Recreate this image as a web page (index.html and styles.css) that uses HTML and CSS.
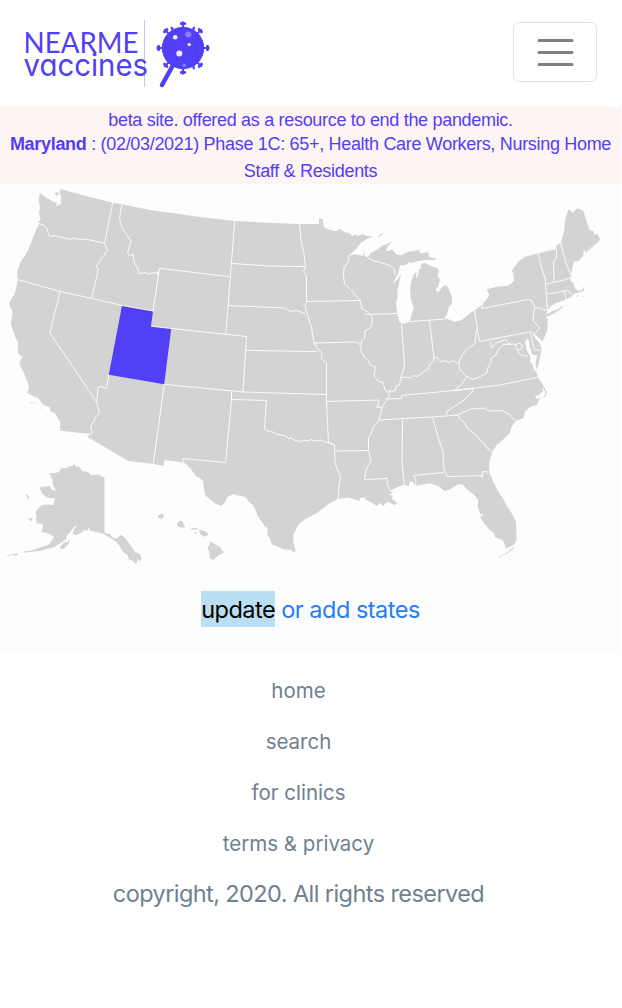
FILE: index.html
```html
<!DOCTYPE html>
<html lang="en">
<head>
<meta charset="utf-8">
<title>NEARME vaccines</title>
<link rel="stylesheet" href="styles.css">
</head>
<body>
<header class="navbar">
  <a class="brand" aria-label="NEARME vaccines">
    <svg class="logo" width="190" height="70" viewBox="22 19 190 70">
      <path d="M144.5 20V87" stroke="#c9c1fb" stroke-width="1"/>
      <text class="logo-top" x="23.5" y="53" textLength="115" lengthAdjust="spacingAndGlyphs">NEARME</text>
      <text class="logo-bottom" x="23.5" y="75.500" textLength="124.500" lengthAdjust="spacingAndGlyphs">vaccines</text>
      <g fill="#513ff5" stroke="#513ff5">
        <circle cx="183" cy="48" r="21.2" stroke="none"/>
        <path d="M172 67L162 85" stroke-width="4.500" stroke-linecap="round"/>
        <g stroke="none">
          <path id="spike" d="M182 28V25.200L180 24.500V22.500L182 22 183 21 184 22 186 22.500V24.500L184 25.200V28Z"/>
          <use href="#spike" transform="rotate(45 183 48)"/>
          <use href="#spike" transform="rotate(90 183 48)"/>
          <use href="#spike" transform="rotate(135 183 48)"/>
          <use href="#spike" transform="rotate(180 183 48)"/>
          <use href="#spike" transform="rotate(225 183 48)"/>
          <use href="#spike" transform="rotate(270 183 48)"/>
          <use href="#spike" transform="rotate(315 183 48)"/>
        </g>
        <path d="M171.700 27.800l.8 1.500M194 27.800l-.6 1.500M194 68.200l-.6-1.500" fill="none" stroke-width="2.400" stroke-linecap="round"/>
      </g>
      <g fill="#f1effc">
        <circle cx="175.2" cy="37.2" r="2.3"/><circle cx="189.2" cy="44.6" r="1.7"/><circle cx="179.3" cy="53.6" r="3"/>
        <circle cx="188.3" cy="34.6" r="3" fill="#8f7cf0"/><circle cx="184.2" cy="65.2" r="1.8" fill="#8f7cf0"/>
      </g>
    </svg>
  </a>
  <button class="toggler" aria-label="Menu">
    <svg width="45" height="45" viewBox="0 0 30 30"><path d="M4 7h22M4 15h22M4 23h22" stroke="#808080" stroke-width="2" stroke-linecap="round"/></svg>
  </button>
</header>

<div class="banner">
  <p class="beta">beta site. offered as a resource to end the pandemic.</p>
  <p class="phase"><b>Maryland</b> : (02/03/2021) Phase 1C: 65+, Health Care Workers, Nursing Home<br>Staff &amp; Residents</p>
</div>

<main class="map-section">
  <svg class="map" width="621" height="390" viewBox="0 184 621 390">
    <g class="land">
      <path d="M39.7 192.7L45.7 197.3 53 201.5 57 203 56 206 58 206 59 203.500 60 205 61 204.500 60.500 201 61.500 197 59.500 193 60.300 189L86 196 112.700 202.700 122 204.300 150 210 170 212.800 200 217 234.700 221 275 223 300 224 319 224V218.300L322.700 219.300 324 227.300 327 229 333.300 230.700 337 231 339.300 229 345 232.300 349 233 352.700 236 355 234.300 358 236 362.700 234.300 368 236.200 373.300 236 367 239 361 242.700 356 249 349 255.500 355 254 359 255 362 256 365 252.300 364 256 367.700 257.300 371 253 376.700 250 383.300 245 391.700 242 388 246 386 250.500 388 251 391.700 249.300 394 252 397.300 255 401.700 255 408.300 251.700 414 251 419.300 249.300 420 253.300 428.300 252.300 429 256.700 432 258 435 257.300 435.500 259.500 433.300 260 425 260 415 261.700 411.700 263.300 409 262 406 265 400 265.500 398 274 395 279 392.700 283.500 396 281 402 274 399.300 280 399 285 397.300 290 397.500 297 396 303.300 397.300 313.300 399.300 321.700 404 324 409.300 321.700 411.700 315 413.700 307.700 410.700 298.300 410 288.300 411.700 280 414 274 416.700 271.700 416 277.300 417.700 276.700 419 269.300 421.500 268 420.700 265 424 262.700 429 265 433.300 267 437.700 268.300 439 271.700 437.500 275 440 280 438.300 286.700 436 288.300 436 291 438.500 292 440 290 442 287 445.700 285 448 287 449.500 291 451.700 296.700 452 304 449.300 306 446.700 315 444.300 318.300 449 319.500 454 321.700 461.700 320 466.700 316 470 313.300 475 310 481.700 305 488.300 297.300 489.300 295 486.700 289.300 496.700 286.700 508.300 285.700 514 280.700 513.300 273.300 511.700 270.700 518.300 261.700 525 256.700 538.300 253.300 556 249 556.700 245 559 244 560.700 243.300 564 231.700 565 220 568.300 210 570 210 572.300 212.700 577.700 208.300 583.300 210.700 589.300 230 593.300 230.700 594 234.300 597.300 234.300 600.500 239.300 597.300 242.700 593.300 246 592 248 590.500 246.500 590 251 588 249 586.700 253.300 584 250 583 256.700 581 258 579.300 261 574 261.700 571.700 271.700 571 277.300 570 280 573.300 283.300 575 288.300 578.300 291 582.500 290 583.300 288.500 582 286.300 584.500 288.500 583.700 291 578 293 575 293.300 572.300 296.500 565 300 556.700 302.700 551 306 547.300 311 546.500 313 546 317.300 547.700 319 547.700 323.300 547.300 330 545 336 542.700 341.500 538 337 532.700 333.300 534 337 538 341 540 344 541.700 349.300 540.500 355 538.300 365 536.300 369.300 535.500 363.300 537 356.700 531.700 354 531 349 529.300 346.700 529.500 342 527.700 338 525 341.700 526 346 526.700 350 528 353 530.500 357 530 361 532.500 365 534 370 536.500 372 537.700 377.300 541.700 383.300 545 388.300 546.700 391.700 546 396 543.300 398 545.500 394 545 391 542 387 543 391 539 395 535 396 537 399 541 398 538.300 401.500 536.700 405 530 406.700 525 412 523.300 418.300 516 421 511.700 426.700 510 432.700 501.700 441 496.700 445 492.300 451.700 489.300 461.700 489.300 471.700 493.300 481.700 498 491 504 500 505 503 511.700 513.300 516 521.700 516.700 536.700 516 542 513.300 545 506 548.500 505 546 504 542.300 500.700 539 495 537.500 494 533 490 530.500 485 524.300 480 516.700 482 516 483.300 512.300 480.500 515 479.300 511.700 477.700 506.700 478.300 500 474.300 495 466.700 489 463.300 485 458.300 484 454 487 450 489.300 444.300 491 438.300 486 430 483.300 415 485.700 413 482 410 481 409 485.700 403.300 485 398 487 395 488.300 390 491 393 493 389 494.500 392.700 496 392 499 397.500 503 395 505 390 503 387.300 501.700 383.300 506 380 503 376.700 506 370.700 502 365 499.500 366 497.500 359.300 498 360 501 348.300 497.700 338.300 498.700 328.300 504 316.700 513.300 306.700 518.300 300 523 296.700 528 293.300 535 293.500 543 295.700 550.700 293.300 552.700 291 550 283.300 549.300 271.700 544.300 270 538 267.300 535 267.500 528 265 526.700 258.300 516.700 256 511 252.700 505 249 502 245 496.700 238 495.500 232.700 494 227.300 497.300 225 502 221.700 505.700 216 504 211.700 500.700 206 496 204.300 491.700 203.300 481.700 200 478 196.700 476.700 190 468 185 463.300 183 462.300 164.300 460 163.700 465.700 153.300 464 128.300 461 87.300 436.700 90.700 434 60.300 430.700 60 421.700 55 413.300 50 410.700V407L43.300 405 38.300 398.300 27.300 393.300 29 386 24 373.300 19.300 363.300 22.300 356.700 17.700 353.300 18 341.700 15 336.700 10.700 323.300 12.700 313.300 9 302.700 15 293.300 17.700 280 17.300 271.700 20 263.300 28.300 250 36.700 228.300 39.300 223.300 38 222 40.700 219.300 39 213 40 208.300 38.700 200Z"/>
      <path d="M55 193l3-1 .5 3-2 1zM377 237.500L380 234.500 384 233 381 236ZM547 317L546 315 551.700 311.500 558 309 563.500 305.300 561.700 308.300 555 312.700ZM576 296l3-1-1 2zM583 296l2 .3-2 .7zM30 402l3 .5-2 1zM34 402l3.500 1.500-4-.5zM46 414l3 2.500-2-1zM45 420l1.500 3.500-1-1zM514 546l-5 5-8 5 7-3 5-4zM503 555l-6 2.500 4-.5z"/>
      <path d="M49.300 473.300L55 473 59 472 61 468.500 67 468 70 466 72 466.500 74 464.300 76 466.500 79 467 82 471 88 472 91 475 98 474.500 104.500 477.500V532.500L108 534 109.500 533 112 537 116 539 120.700 535 124 537 128 541.700 131 546 135 551.700 140 554.500 141.500 558 140.500 561 138 559.500 136 564 132 560.500 129 559.500 127.500 555 123 551.700 119 545 115 541 108 536.500 103 533.500 96 532 90 530.500 88.500 527.500 87 531 84 530 82.500 532 77 535 72.500 534 74 529 78 525.500 74 527 70 532 66 536.500 66.500 539 60 543.500 55 546.700 48 548.500 41.700 550.500 34 551.500 25 552.700 24 551.500 31 550.500 41.700 547 49 544.500 54 537 50 534.500 45 532.500 41.500 532 43.500 525 41 523.500 37 523.500 35.500 518 37 517.500 35.500 511.700 40 506.500 43.300 505 48 504.500 53.300 505 55 498.500 46.700 497.500 41.700 493 39.700 487.500 45 486.500 50 486 51.500 489.500 56 491 53 485 52.500 480Z"/>
      <path d="M60 547l4-4.500 4-.5 0-2 2 .5-2 4-4 4-3 .5zM25 493.500l3 2 2 4-3-2zM14 508.500l2 3zM28 518l5 .5-1.500 3zM6 555.500l6-1.500-3 2zM12 554l6-.5-1 2-4 0zM39 551l3 2zM55 553l1.500 1zM151 518.500l2-2-1 2zM157.500 516.500l2-2 3-.8 1.500 1.500-1 3-3 .5zM177 523.500l3.500-3 2 1 1 3 2.500 2.500-3.500 .8-4-1zM190.500 528.500l5-.5 3 .7-3 1-4-.2zM194 532.300l3-.5-1.300 2.500zM198.500 530.500l2-.5 5 1.500 3.500 3-4 2.200-4-1.700zM209.500 541.300l5 2.500 6 3.500 1 3 3 2-6 3-5 4.500-3.500-1-.5-6-2-5 2-3z"/>
    </g>
    <path class="utah" d="M122 305.500L153 311 151 326.200 171.200 328.500 164.200 384.300 108.800 374.800Z"/>
    <g class="borders">
      <path d="M38.500 223.500L44 225.500 47.500 229 48.500 235 51 236.500 54 235.500 62 237.500 70 239.300 73 238 78 239 88 239.500 104.500 243.300M112.700 202.700L107 231 104.500 243.300 107.500 250 98 264 96 267 98.500 269 91.500 298.300M17.700 279.500L60 291.500 91.500 298.300 122 305.500 153 311M60 291.500L50 333 96.700 402M122 204.300L119.500 218 122 228 127 235 131 241 127.500 253 130 256 133 254 134.500 263 138 269 139.500 274 144 272.500 149 274 154 272.500 156 274 157 271.500 158.500 276M153 311L159.500 268.300 229.500 276.700M151 326.200L171.200 328.500 246.500 336.500M234.700 221L225.800 334M231.500 263.500L270 266 305.500 266.700M228 305.500L285 308 290 311.300 297 310.500 302 312.500 305 314M299.500 224L301 241 304 253 305.500 266.700 303.500 272 306.500 276V301L305 306 306.500 312 311.500 328 314 342.500 318 349 322 353 321.500 358 326.500 364V394M306.500 301.500L360 300.500M245.500 350.300L317.500 351.700M246.500 336.500L243 392M164.200 384.300L243 392 326.500 394.500M231.500 391.500V399.500L266.500 400.500 264.500 429 269 432 272 431.500 276 434 286 436 289 439 291 437.500 294 440 300 441.500 303 440 308 441 311 439.500 315 441 321 440 325 442 328 442.500 334 444.500M231.500 399.500L225.700 462.500 183 458.500V462.300M164.200 384.300L153.300 464M108.800 374.800L106.500 388 104 388 102 386.500 98 387.500 96.700 402 99.500 413 95 418 94 422 91 425 91 430 93 432 90.700 434M313.500 343L357.500 342L360 345M326.500 401.500L378.500 400 379 404 376.500 407 381.500 407.500M326.500 394V401.500L328.500 443 334.500 445 335 463 340.500 477 339 487 338 498.500M335 451L368.500 450.500M349 255.500L348.500 261 344 268 343.500 275 344.500 284 353 292 360 300.500 362 309 368 312 372 317 372 323 370 328 365 331 364.500 338 361.500 341 360.500 350 364 357 369 361.500 370 365 375.500 367 374 376 378 381 383 382.500 385 390 387.500 392.500 389.500 390 389 397 382.500 406 379 420 373 428 371 434 368.500 438 368.500 450 371 461 366 470 364.500 479.500 387.500 478.500 387 483 390 491M364.500 314.500L397.300 313.500M368 258L373 260.500 389 265 394 269 395 275M401.500 323L404.500 366 400.500 379 399.500 385 396 386 395 391 389.500 391M409.500 321.700L444.500 319M429.500 320.500L434 358M401 378L405 377 410 378 414 375 417 377 423 372 428 369 430 364 434 361 434 358 437 357 441 362 445 360.500 449 362.500 453 360.500 456 362.500 459 363.500 461 357 467 349 475 344 476.500 329M459 364L460 370 467 376.500 462 384 454 390.500M385 399L401.500 398.500V395.500L454 390.500 500 385 537.500 377.300M379 420L432 417 458.500 415M454 390.500L473 388.500 472 392 463 401 455 406 447 411.500 446.500 415M402.500 420L402 464 404.500 485M432.500 417.500L437.500 435 443.500 454 443 461 444 470 447.500 476.500 481.500 475.500V477L482.500 477V471.500L489.500 472M444 472.500L413.500 475.500 416 480 415.500 485.500M458.500 414.500L459.500 419 464 422 468 429 476 435 479 439 484 443 487 448 492 452M458.500 414.500L471 409 485 408 488 411 502 410.500 508 413.500 516 421M467 376.500L472 379.500 476 378.500 483 375 487 373 488 367 491 363 491 358 496 355 498 350 504 344.500 513 344 517 345M474.500 310L479.500 341.500 531 331.700M490.500 341L491.500 348 496 343 500 341.500 506 339.500 508 343 512 345M531 331.700L534 334 540 328 533 321 534.500 307 532 301 528 299.500 482 308.500V304M534.500 307L547 310.500M530.500 333L534.500 350H540M538.300 253.300L541 266 545 278 547.500 310M556.500 249V257L553.500 262 554 282M560.500 243.500L567 266 571 275M546.500 284L564 280 571 277.500M547.500 294L567.500 290.500 573.500 296M564.500 291.500L566.500 300"/>
      <circle cx="519" cy="346.500" r="3.200"/>
      <path d="M517 350L519 354 524 356 528 356M531.500 356l6-1"/>
    </g>
  </svg>
  <p class="update"><mark>update</mark> or add states</p>
</main>

<footer class="footer">
  <a>home</a>
  <a>search</a>
  <a>for clinics</a>
  <a>terms &amp; privacy</a>
  <p>copyright, 2020. All rights reserved</p>
</footer>
</body>
</html>
```

FILE: styles.css
```css
* { box-sizing: border-box; }
body { margin: 0; background: #fff; font-family: Inter, sans-serif; }
p { margin: 0; }
.navbar { height: 107px; padding: 19px 25px 0 22px; display: flex; justify-content: space-between; align-items: flex-start; }
.logo { display: block; }
.logo text { fill: #513ff5; font-family: Inter, sans-serif; font-feature-settings: "cv11"; }
.logo .logo-top { font-family: Lato, sans-serif; font-size: 29px; font-weight: 400; }
.logo .logo-bottom { font-size: 31px; font-weight: 400; }
.toggler { width: 84px; height: 60px; margin-top: 3px; padding: 0; display: flex; align-items: center; justify-content: center; background: #fff; border: 1.500px solid #e2e2e2; border-radius: 6px; }
.banner { width: 621px; height: 77px; background: #fff4f4; color: #513ff5; text-align: center; font-family: "Liberation Sans", Arial, sans-serif; font-size: 18px; line-height: 27px; letter-spacing: -0.310px; white-space: nowrap; }
.beta { height: 24px; }
.map-section { width: 621px; height: 468px; background: #fdfdfd; text-align: center; }
.map { display: block; }
.land { fill: #d3d3d3; }
.utah { fill: #513ff5; }
.borders { fill: none; stroke: #fff; stroke-width: 0.9; stroke-linejoin: round; }
.update { padding-top: 17px; color: #267df4; font-size: 23.500px; line-height: 36px; letter-spacing: -0.500px; }
.update mark { display: inline-block; padding-top: 1px; height: 36px; background: #bbdff2; color: #000; }
.footer { width: 597px; padding-top: 13px; display: flex; flex-direction: column; align-items: center; color: #708090; font-size: 20.500px; }
.footer a { height: 51px; line-height: 51px; }
.footer p { font-size: 23.500px; line-height: 50px; letter-spacing: -0.580px; }
```
